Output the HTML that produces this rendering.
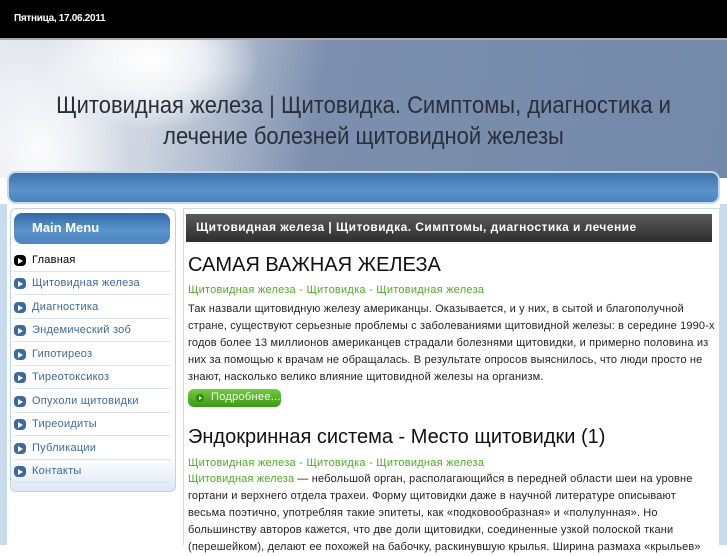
<!DOCTYPE html>
<html><head><meta charset="utf-8"><style>
*{margin:0;padding:0;box-sizing:border-box}
body{width:727px;height:545px;overflow:hidden;background:#fff;font-family:"Liberation Sans","DejaVu Sans",sans-serif;position:relative}
.top{position:absolute;left:0;top:0;width:727px;height:38px;background:#000;color:#fff;font-size:10px;font-weight:bold;padding:13px 0 0 14px;letter-spacing:-0.3px}
.hdr{position:absolute;left:0;top:38px;width:727px;height:140px;border-top:2px solid #aaa;
background:radial-gradient(ellipse 110px 70px at 150px 20px,#fff 0%,rgba(255,255,255,.7) 50%,rgba(255,255,255,0) 100%),
radial-gradient(ellipse 90px 120px at 40px 110px,rgba(255,255,255,.9) 0%,rgba(255,255,255,.4) 60%,rgba(255,255,255,0) 100%),
linear-gradient(100deg,#e4e8ef 0%,#cdd4e0 22%,#a3b1c7 34%,#7c8fae 44%,#7389aa 100%)}
.hdr h1{position:absolute;left:0;top:50px;width:727px;text-align:center;font-weight:normal;font-size:24px;line-height:31px;color:#2a2e38;transform:scaleX(0.915)}
.bar{position:absolute;left:7px;top:171px;width:713px;height:33px;border-radius:9px;border:2px solid #c6d9ea;background:linear-gradient(#3e73ad,#5b93cc 60%,#4a82bd)}
.frame{position:absolute;left:0;top:204px;width:727px;height:341px;background:#fff;border-left:7px solid #c9dcee;border-right:7px solid #c9dcee}
.side{position:absolute;left:10px;top:208px;width:166px;height:284px;border:1px solid #bcd3e8;border-radius:6px;background:linear-gradient(#fff 88%,#dce8f4)}
.mh{position:absolute;left:14px;top:213px;width:156px;height:31px;border-radius:8px;background:linear-gradient(#2f69a7,#5b93cb 55%,#4d86c0);color:#fff;font-weight:bold;font-size:13px;padding:7px 0 0 18px}
.mi{position:absolute;left:14px;width:156px;height:23px;border-bottom:1px solid #d9e3ee;font-size:11px;color:#3a6aa0;padding:5px 0 0 18px;letter-spacing:0.25px}
.mi:before{content:"";position:absolute;left:0;top:6px;width:12px;height:11px;border-radius:4px;background:#3a6aa0}
.mi:after{content:"";position:absolute;left:4px;top:9px;border-left:5px solid #fff;border-top:3px solid transparent;border-bottom:3px solid transparent}
.mi.a{color:#000}.mi.a:before{background:#000}
.cont{position:absolute;left:183px;top:208px;width:537px;height:337px;border:1px solid #c9dcee;border-bottom:0}
.ch{position:absolute;left:186px;top:214px;width:526px;height:28px;background:linear-gradient(#5a5a5a,#2e2e2e);color:#fff;font-weight:bold;font-size:12px;padding:6px 0 0 10px;letter-spacing:0.45px;white-space:nowrap}
.h{position:absolute;left:188px;font-size:20px;color:#111}
.g{position:absolute;left:188px;font-size:11px;color:#4caf1f;letter-spacing:0.25px}
.p{position:absolute;left:188px;width:535px;font-size:11px;line-height:17.1px;color:#222;letter-spacing:0.15px;white-space:nowrap}
.p span{color:#4caf1f}
.btn{position:absolute;left:188px;top:389px;width:93px;height:18px;border-radius:6px;background:linear-gradient(#6fcc3a,#3a9a14);color:#fff;font-size:11px;padding:2px 0 0 23px;letter-spacing:0.3px}
.btn:before{content:"";position:absolute;left:8px;top:5px;width:8px;height:8px;border-radius:50%;background:#2f8a10}
.btn:after{content:"";position:absolute;left:11px;top:7px;border-left:3px solid #fff;border-top:2px solid transparent;border-bottom:2px solid transparent}
</style></head><body>
<div class="top">Пятница, 17.06.2011</div>
<div class="hdr"><h1>Щитовидная железа | Щитовидка. Симптомы, диагностика и<br>лечение болезней щитовидной железы</h1></div>
<div class="frame"></div>
<div class="bar"></div>
<div class="side"></div>
<div class="mh">Main Menu</div>
<div class="mi a" style="top:249px">Главная</div>
<div class="mi" style="top:272px">Щитовидная железа</div>
<div class="mi" style="top:296px">Диагностика</div>
<div class="mi" style="top:319px">Эндемический зоб</div>
<div class="mi" style="top:343px">Гипотиреоз</div>
<div class="mi" style="top:366px">Тиреотоксикоз</div>
<div class="mi" style="top:390px">Опухоли щитовидки</div>
<div class="mi" style="top:413px">Тиреоидиты</div>
<div class="mi" style="top:437px">Публикации</div>
<div class="mi" style="top:460px">Контакты</div>
<div class="cont"></div>
<div class="ch">Щитовидная железа | Щитовидка. Симптомы, диагностика и лечение</div>
<div class="h" style="top:254px">САМАЯ ВАЖНАЯ ЖЕЛЕЗА</div>
<div class="g" style="top:284px">Щитовидная железа - Щитовидка - Щитовидная железа</div>
<div class="p" style="top:301px">Так назвали щитовидную железу американцы. Оказывается, и у них, в сытой и благополучной<br>стране, существуют серьезные проблемы с заболеваниями щитовидной железы: в середине 1990-х<br>годов более 13 миллионов американцев страдали болезнями щитовидки, и примерно половина из<br>них за помощью к врачам не обращалась. В результате опросов выяснилось, что люди просто не<br>знают, насколько велико влияние щитовидной железы на организм.</div>
<div class="btn">Подробнее...</div>
<div class="h" style="top:426px">Эндокринная система - Место щитовидки (1)</div>
<div class="g" style="top:457px">Щитовидная железа - Щитовидка - Щитовидная железа</div>
<div class="p" style="top:471px"><span>Щитовидная железа</span> — небольшой орган, располагающийся в передней области шеи на уровне<br>гортани и верхнего отдела трахеи. Форму щитовидки даже в научной литературе описывают<br>весьма поэтично, употребляя такие эпитеты, как «подковообразная» и «полулунная». Но<br>большинству авторов кажется, что две доли щитовидки, соединенные узкой полоской ткани<br>(перешейком), делают ее похожей на бабочку, раскинувшую крылья. Ширина размаха «крыльев»</div>
</body></html>
